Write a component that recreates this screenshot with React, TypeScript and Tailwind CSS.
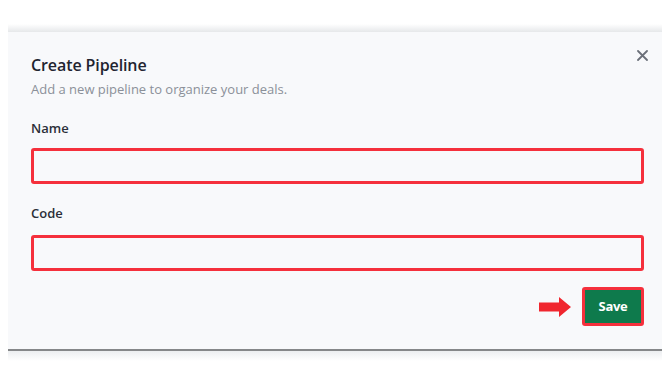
import React from "react";

export default function App() {
  return (
    <div
      className="w-[670px] h-[376px] bg-white pt-[24px] pl-[8px] pr-[8px] overflow-hidden"
      style={{ fontFamily: '"Open Sans", "Noto Sans", sans-serif' }}
    >
      <div className="h-[8px] bg-gradient-to-b from-white to-[#e6e8ea]" />
      <div className="relative w-[654px] h-[319px] bg-[#f8f9fb] border-b-2 border-[#858789] pl-[23px] pr-[18px] pt-[21px] flex flex-col">
        <button className="absolute right-[14px] top-[17px] w-[12px] h-[12px] flex items-center justify-center text-[#6b7079]">
          <svg width="11" height="11" viewBox="0 0 11 11" fill="none">
            <path d="M1 1L10 10M10 1L1 10" stroke="currentColor" strokeWidth="1.8" strokeLinecap="round" />
          </svg>
        </button>
        <h2 className="text-[16px] leading-[24px] font-semibold text-[#1f2430] tracking-[-0.1px]">Create Pipeline</h2>
        <p className="mt-[3px] text-[13px] leading-[18px] text-[#8b9099]">
          Add a new pipeline to organize your deals.
        </p>
        <label className="mt-[21px] text-[13px] leading-[18px] font-semibold text-[#2b2f38]">Name</label>
        <div className="mt-[11px] h-[36px] w-[613px] rounded-[3px] border-[3px] border-[#f5303c] bg-[#f8f9fb]" />
        <label className="mt-[20px] text-[13px] leading-[18px] font-semibold text-[#2b2f38]">Code</label>
        <div className="mt-[13px] h-[36px] w-[613px] rounded-[3px] border-[3px] border-[#f5303c] bg-[#f8f9fb]" />
        <div className="mt-[16px] w-[613px] flex items-center justify-end gap-[11px]">
          <svg width="32" height="20" viewBox="0 0 32 20">
            <path d="M0 5.5H20V0L32 10L20 20V14.5H0Z" fill="#f0262e" />
          </svg>
          <div className="h-[39px] w-[62px] rounded-[3px] border-[3px] border-[#f5303c] bg-[#0e7a4c] flex items-center justify-center text-white text-[13px] font-bold tracking-[-0.3px]">
            Save
          </div>
        </div>
      </div>
      <div className="h-[10px] bg-gradient-to-b from-[#eceef0] to-white" />
    </div>
  );
}
